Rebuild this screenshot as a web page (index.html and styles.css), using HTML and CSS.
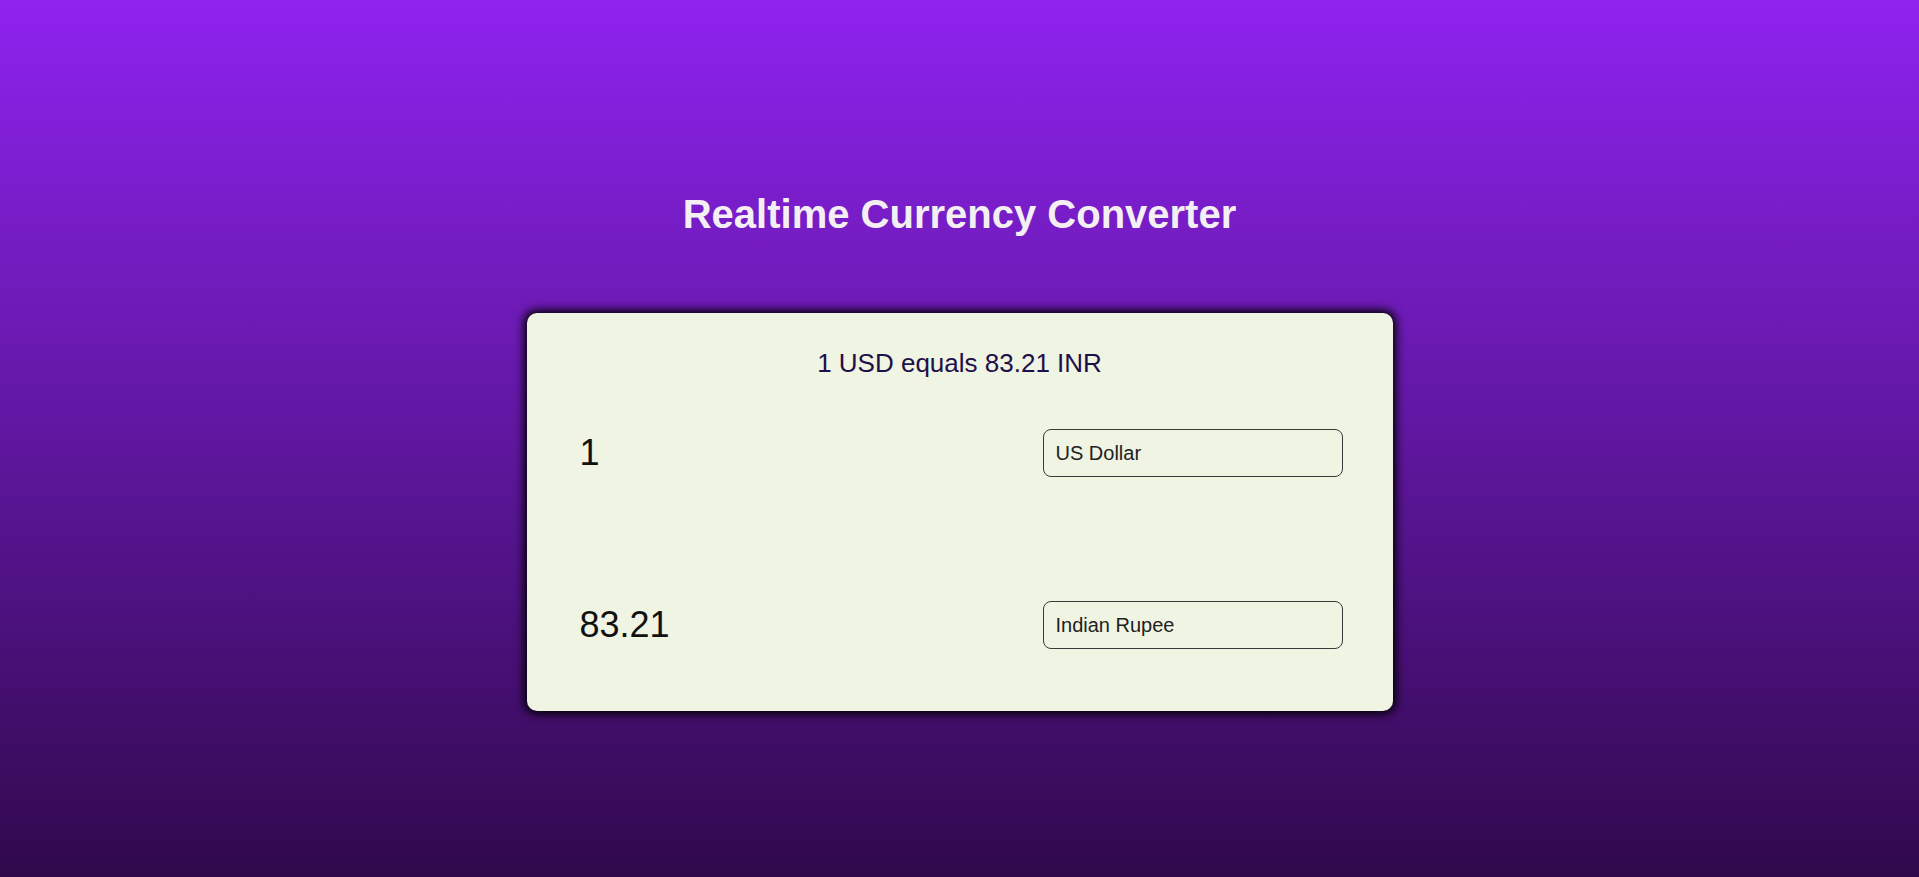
FILE: index.html
```html
<!DOCTYPE html>
<html lang="en">
<head>
<meta charset="utf-8">
<title>Realtime Currency Converter</title>
<link rel="stylesheet" href="styles.css">
</head>
<body>
<main class="page">
  <h1 class="title">Realtime Currency Converter</h1>
  <section class="card">
    <p class="rate">1 USD equals 83.21 INR</p>
    <div class="row">
      <input class="amount" type="text" value="1" readonly>
      <select class="currency">
        <option>US Dollar</option>
      </select>
    </div>
    <div class="row row-second">
      <input class="amount" type="text" value="83.21" readonly>
      <select class="currency">
        <option>Indian Rupee</option>
      </select>
    </div>
  </section>
</main>
</body>
</html>
```
FILE: styles.css
```css
html, body {
  margin: 0;
  padding: 0;
}
body {
  min-height: 877px;
  background: linear-gradient(to bottom, #8f23ef 0%, #5f179f 50%, #30094c 100%);
  font-family: "Liberation Sans", Arial, sans-serif;
}
.page {
  display: flex;
  flex-direction: column;
  align-items: center;
  padding-top: 191px;
}
.title {
  margin: 0;
  font-size: 40px;
  line-height: 46px;
  font-weight: 700;
  color: #f3eff3;
}
.card {
  margin-top: 76px;
  width: 866px;
  box-sizing: border-box;
  padding: 35px 50px 62px 50px;
  background: #eff4e3;
  border-radius: 10px;
  box-shadow: 0 0 10px 3px #000;
  display: flex;
  flex-direction: column;
}
.rate {
  margin: 0;
  text-align: center;
  font-size: 26px;
  line-height: 30px;
  color: #1f0f4b;
}
.row {
  margin-top: 51px;
  height: 48px;
  display: flex;
  align-items: center;
  justify-content: space-between;
}
.row-second {
  margin-top: 124px;
}
.amount {
  border: none;
  background: transparent;
  outline: none;
  padding: 0 0 0 3px;
  font-family: "Liberation Sans", Arial, sans-serif;
  font-size: 36px;
  line-height: 42px;
  color: #111;
  width: 300px;
}
.currency {
  -webkit-appearance: none;
  appearance: none;
  width: 300px;
  height: 48px;
  box-sizing: border-box;
  border: 1px solid #3a3a3a;
  border-radius: 8px;
  background: transparent;
  padding: 0 12px;
  font-family: "Liberation Sans", Arial, sans-serif;
  font-size: 20px;
  color: #222;
}
```
